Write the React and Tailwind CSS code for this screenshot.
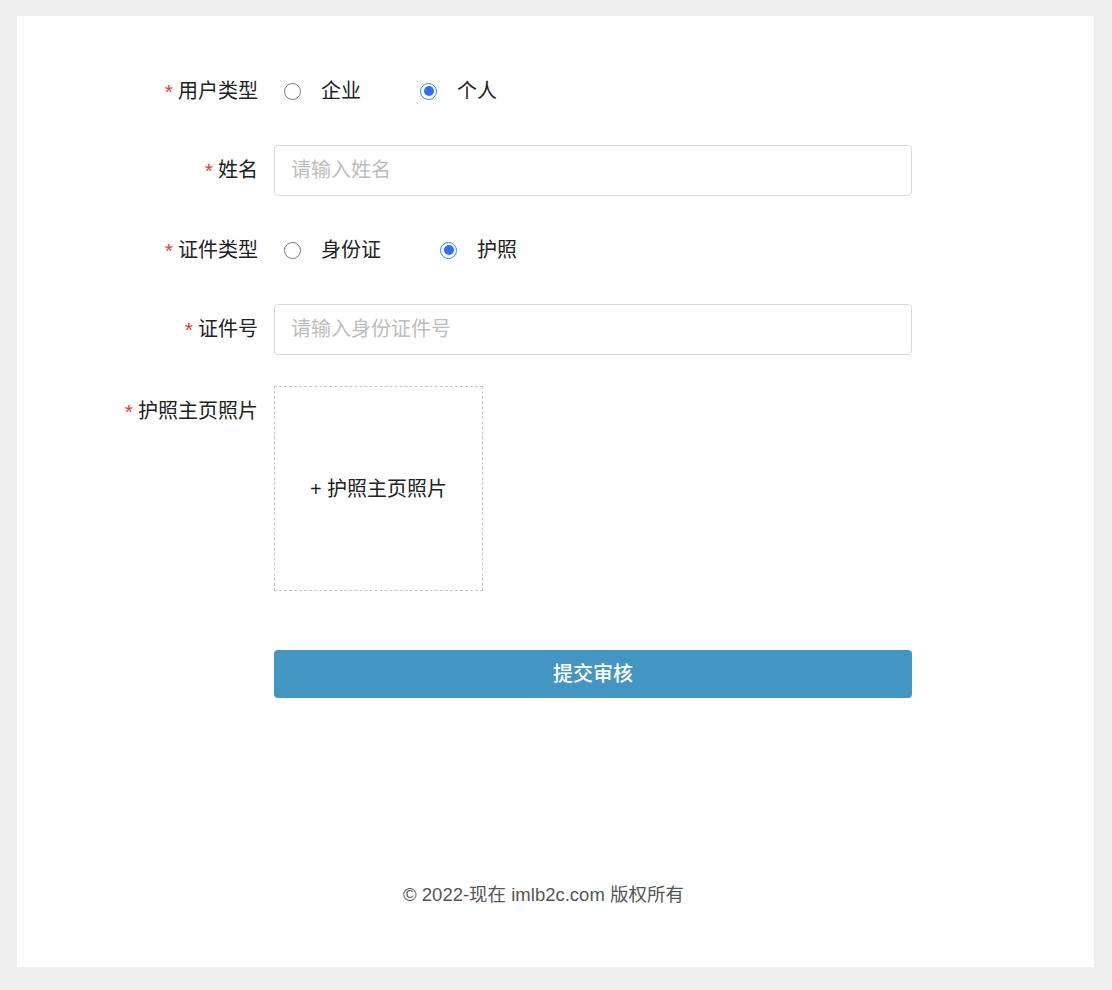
import React, { useState } from 'react';

const FONT = { fontFamily: '"Liberation Sans", "Noto Sans CJK SC", sans-serif' };

function Radio({ checked, label, onClick }) {
  return (
    <button type="button" onClick={onClick} className="flex items-center mr-[59px]">
      {checked ? (
        <span className="w-[17px] h-[17px] rounded-full border-[1.5px] border-[#3d7ff5] bg-white flex items-center justify-center">
          <span className="w-[10px] h-[10px] rounded-full bg-[#2f6ff0]" />
        </span>
      ) : (
        <span className="w-[17px] h-[17px] rounded-full border border-[#777] bg-white" />
      )}
      <span className="ml-[20px] text-[20px] text-[#222]">{label}</span>
    </button>
  );
}

function Row({ label, top, className = '', children }) {
  return (
    <div className={`flex mb-[29px] ${className}`}>
      <div className={`w-[241px] h-[50px] flex justify-end ${top ? 'items-start pt-[12px]' : 'items-center'}`}>
        <span className="text-[#e53935] text-[21px] mr-[5px] leading-[26px] relative top-[1px]">*</span>
        <span className="text-[20px] text-[#222] leading-[26px]">{label}</span>
      </div>
      <div className="ml-[16px] w-[638px]">{children}</div>
    </div>
  );
}

export default function App() {
  const [userType, setUserType] = useState('person');
  const [idType, setIdType] = useState('passport');
  const [name, setName] = useState('');
  const [idNo, setIdNo] = useState('');

  return (
    <div className="min-h-screen bg-[#eeeeee] pt-[16px] pl-[17px] pr-[18px] pb-[23px]" style={FONT}>
      <div className="bg-white h-[951px] flex flex-col pt-[50px]">
        <Row label="用户类型">
          <div className="h-[50px] flex items-center pl-[10px]">
            <Radio checked={userType === 'company'} label="企业" onClick={() => setUserType('company')} />
            <Radio checked={userType === 'person'} label="个人" onClick={() => setUserType('person')} />
          </div>
        </Row>
        <Row label="姓名">
          <input value={name} onChange={(e) => setName(e.target.value)} placeholder="请输入姓名"
            className="w-full h-[51px] border border-[#d9d9d9] rounded-[4px] px-[16px] text-[20px] text-[#222] placeholder:text-[#bdbdbd] outline-none" />
        </Row>
        <Row label="证件类型">
          <div className="h-[50px] flex items-center pl-[10px]">
            <Radio checked={idType === 'id'} label="身份证" onClick={() => setIdType('id')} />
            <Radio checked={idType === 'passport'} label="护照" onClick={() => setIdType('passport')} />
          </div>
        </Row>
        <Row label="证件号">
          <input value={idNo} onChange={(e) => setIdNo(e.target.value)} placeholder="请输入身份证件号"
            className="w-full h-[51px] border border-[#d9d9d9] rounded-[4px] px-[16px] text-[20px] text-[#222] placeholder:text-[#bdbdbd] outline-none" />
        </Row>
        <Row label="护照主页照片" top className="mt-[2px]">
          <div className="w-[209px] h-[205px] border border-dashed border-[#c8c8c8] flex items-center justify-center text-[20px] text-[#222]">
            + 护照主页照片
          </div>
        </Row>
        <div className="flex mt-[30px]">
          <div className="w-[241px]" />
          <button type="button" className="ml-[16px] w-[638px] h-[48px] bg-[#4396c2] rounded-[4px] text-white text-[20px] font-medium">
            提交审核
          </button>
        </div>
        <div className="mt-auto pb-[60px] pr-[24px] text-center text-[18.5px] text-[#555] leading-[24px]">
          © 2022-现在 imlb2c.com 版权所有
        </div>
      </div>
    </div>
  );
}
